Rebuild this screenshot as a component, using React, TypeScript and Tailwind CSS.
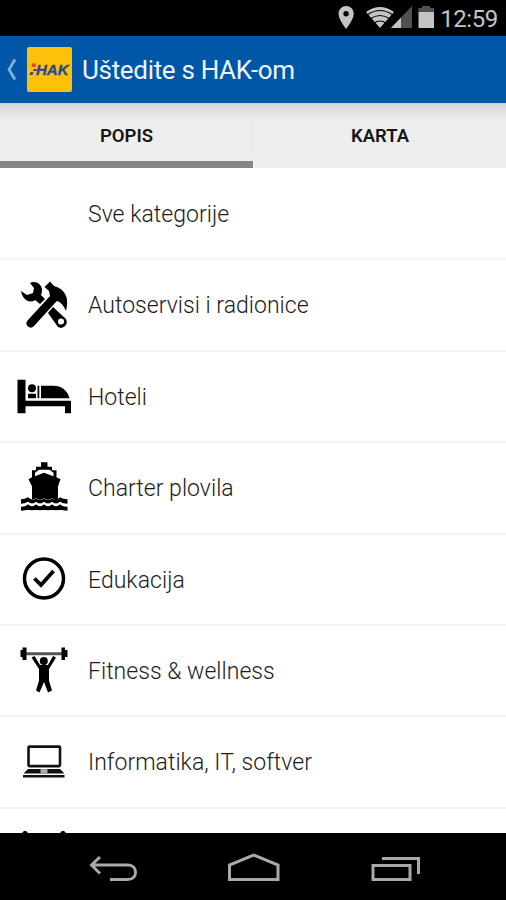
import type { ReactNode } from "react";

type Category = { label: string; view: string; icon?: ReactNode };

const tools = (
  <>
    <path d="M30 283 C35 280 42 284 42 290 Q42 293 41 295 L45 299 L40 304 L35 300 Q31 303 26 300 Q22 297 21 291 L27 295 L33 293 L34 288 Z" />
    <path d="M44.5 287 L50 281.5 L54 286 Q63 288 66.5 297 Q68 303 66 311 Q62 302 57 301 L55 303 L34 326 Q31 329 28 326.5 Q25 324 27.500 320.500 L50 296 L49 291 Z" />
    <path fillRule="evenodd" d="M48 313 L53 307 L66 319 Q68 323 65 326 Q62 329 58 327 Z M61 318.500 A3 3 0 1 0 61.100 324.500 A3 3 0 1 0 61 318.500 Z" />
  </>
);

const bed = (
  <>
    <path d="M17.500 380 H25.500 V401 H71 V413.500 H65 V406.500 H25.500 V413.500 H17.500 Z" />
    <circle cx="32" cy="388.500" r="4" />
    <path d="M28 394 H36 V398.500 H28 Z M37.500 386 H39.300 V398.500 H37.500 Z M41 386 H53 Q66 386 69.500 398.500 H41 Z" />
  </>
);

const ship = (
  <>
    <path fillRule="evenodd" d="M41 463 H47.500 V467.500 H52 V471 H56.500 V478 L60.500 480 L58 487 V500 Q55 502 52 499 Q48 502 44 499 Q40 502 36 499 Q34 501 32 500 V487 L28.500 480 L32 478 V471 H36 V467.500 H41 Z M35 473.500 V477 L44 473.500 L53.500 477 V473.500 L49.500 470.500 H39 Z" />
    <path d="M21 500 Q25 500 28 498 Q32 502 36 499.500 Q40 502 44 499.500 Q48 502 52 499.500 Q57 502 60 498 Q63 500 67.500 500 V504.500 Q63 504.500 60 502.500 Q56 506 52 502.500 Q48 506 44 502.500 Q40 506 36 502.500 Q32 506 28 502.500 Q25 504.500 21 504.500 Z" />
    <path fill="none" stroke="#000" strokeWidth="4" d="M21 509.500 Q25 509.500 28 507.500 Q32 510.500 36 507.500 Q40 510.500 44 507.500 Q48 510.500 52 507.500 Q56 510.500 60 507.500 Q63 509.500 67.500 509.500" />
  </>
);

const check = (
  <g fill="none" stroke="#000">
    <circle cx="44" cy="578.500" r="19.500" strokeWidth="3.500" />
    <path strokeWidth="3.800" d="M34.500 578.500 L41 585 L53.500 571" />
  </g>
);

const lifter = (
  <>
    <path fill="#555" d="M26 652.700 H62 V655.700 H26 Z" />
    <path d="M20.500 650.500 H22.500 V648 H26.500 V660.500 H22.500 V657.500 H20.500 Z M61.500 648 H65 V650.500 H67.500 V657.500 H65 V660.500 H61.500 Z" />
    <circle cx="43.800" cy="661.500" r="4" />
    <path d="M31.500 658 L34.500 656.500 L40 665.500 H48 L53 656.500 L56 658 L49 669.500 V681 L52 691 L48 693 L44 682.500 L39.500 693 L36 691 L39 681 V669.500 Z" />
  </>
);

const laptop = (
  <>
    <rect x="28.500" y="746.500" width="31.500" height="19.500" rx="1" fill="none" stroke="#111" strokeWidth="2.600" />
    <path fill="#111" d="M28 769 H60 L64.500 773.500 H23.500 Z" />
    <path fill="#aaa" d="M40.500 769 H47.500 V773.500 H40.500 Z" />
    <path fill="#111" d="M23 775 H64.500 V777.300 H23 Z" />
  </>
);

const categories: Category[] = [
  { label: "Sve kategorije", view: "0 168 88 91" },
  { label: "Autoservisi i radionice", view: "0 259.900 88 91", icon: tools },
  { label: "Hoteli", view: "0 351.300 88 91", icon: bed },
  { label: "Charter plovila", view: "0 442.700 88 91", icon: ship },
  { label: "Edukacija", view: "0 534 88 91", icon: check },
  { label: "Fitness & wellness", view: "0 625.400 88 91", icon: lifter },
  { label: "Informatika, IT, softver", view: "0 716.900 88 91", icon: laptop },
  {
    label: "",
    view: "0 807.800 88 91",
    icon: <path d="M22.500 834 V832 Q25 829 27.500 832 V834 Z M60.500 834 V832 Q63 829 65.500 832 V834 Z" />,
  },
];

function StatusBar() {
  return (
    <header className="flex h-9 shrink-0 items-center justify-end bg-black pr-2 text-[#c4c4c4]">
      <svg width="110" height="36" viewBox="330 0 110 36" fill="currentColor">
        <path fillRule="evenodd" d="M346 6 A7.500 7.500 0 0 1 353.800 13.500 Q353.800 19 346 29 Q338.500 19 338.500 13.500 A7.500 7.500 0 0 1 346 6 Z M346 11 A2.700 2.700 0 1 0 346.100 16.400 A2.700 2.700 0 1 0 346 11 Z" />
        <path d="M366 12 Q380 2 394 12 L380 28 Z" />
        <path d="M367 15 Q380 6 393 15 M370 19 Q380 12 390 19 M374 23 Q380 19 386 23" fill="none" stroke="#000" strokeWidth="1.200" />
        <path fill="#505050" d="M391 28 L412 6 V28 Z" />
        <path d="M391 28 L401 17.500 V28 Z" />
        <path fill="#505050" d="M422 6 H430 V8 H434 V13 H418.500 V8 H422 Z" />
        <path d="M418.500 12 H434 V28 H418.500 Z" />
      </svg>
      <span className="w-[58px] pt-[2px] text-center text-[24px] leading-8 tracking-[-0.5px] whitespace-nowrap">12:59</span>
    </header>
  );
}

function TitleBar() {
  return (
    <div className="flex h-[67px] shrink-0 items-center bg-[#0057a8] text-[#edf4fb]">
      <svg width="27" height="67" viewBox="0 36 27 67" fill="none" stroke="#7eb0db" strokeWidth="2.800">
        <path d="M15 59.500 L9 69.500 L15 79.500" />
      </svg>
      <div className="flex h-[45px] w-[45px] items-center justify-center rounded-[2px] bg-[#fdc00b]">
        <svg width="41" height="20" viewBox="0 0 41 20">
          <text x="7" y="15" fontFamily="Liberation Sans, sans-serif" fontSize="15.500" fontWeight="bold" fontStyle="italic" fill="#1f4f86" stroke="#1f4f86" strokeWidth="0.400" textLength="32.500" lengthAdjust="spacingAndGlyphs">HAK</text>
          <path fill="#e8442a" d="M3 3.500 H7 L6.500 7 H2.500 Z" />
          <path fill="#1f4f86" d="M1.500 12 H4.500 L3.500 15 H0.500 Z M4.500 9 H8 L7.500 11 H4 Z" />
        </svg>
      </div>
      <h1 className="pt-px pl-[10px] text-[26px] leading-8 tracking-[-0.32px] whitespace-nowrap">Uštedite s HAK-om</h1>
    </div>
  );
}

function Tabs() {
  return (
    <nav className="flex h-[65px] shrink-0 bg-linear-to-b from-[#d2d2d2] via-[#eeeeee] via-25% to-[#eeeeee] text-[18.500px] font-semibold text-[#161616]">
      <button className="flex w-[253px] items-center justify-center border-b-[7px] border-[#858585] pt-[9px]">POPIS</button>
      <div className="mt-3 mb-3 w-px bg-[#e6e6e6]" />
      <button className="flex flex-1 items-center justify-center pt-[3px]">KARTA</button>
    </nav>
  );
}

function NavigationBar() {
  return (
    <footer className="h-[67px] shrink-0 bg-black">
      <svg width="506" height="67" viewBox="0 833 506 67" fill="none" stroke="#a9a9a9" strokeWidth="3">
        <path d="M100 857 L91.500 865 L100 873.500 M92 865 H128 C138 865 138 879.500 128 879.500 H110" />
        <path d="M229.500 872.500 V879.500 H278 V865 L253.500 855 L229.500 865 Z" />
        <path d="M373 865.500 H410 V879.500 H373 Z M382 858.500 H418.500 V874" />
      </svg>
    </footer>
  );
}

export default function App() {
  return (
    <div className="flex h-[900px] w-[506px] flex-col overflow-hidden bg-white font-[Roboto,sans-serif]">
      <StatusBar />
      <TitleBar />
      <Tabs />
      <main className="flex h-[665px] shrink-0 flex-col overflow-hidden pt-px">
        {categories.map(({ label, view, icon }) => (
          <div key={view} className="flex h-[91.400px] shrink-0 items-center border-b-2 border-[#f4f4f4]">
            <svg width="88" height="91" viewBox={view} className="shrink-0">{icon}</svg>
            <span className="pt-[3px] text-[23px] font-light tracking-[0.03px] whitespace-nowrap text-[#1c1c1c]">{label}</span>
          </div>
        ))}
      </main>
      <NavigationBar />
    </div>
  );
}
